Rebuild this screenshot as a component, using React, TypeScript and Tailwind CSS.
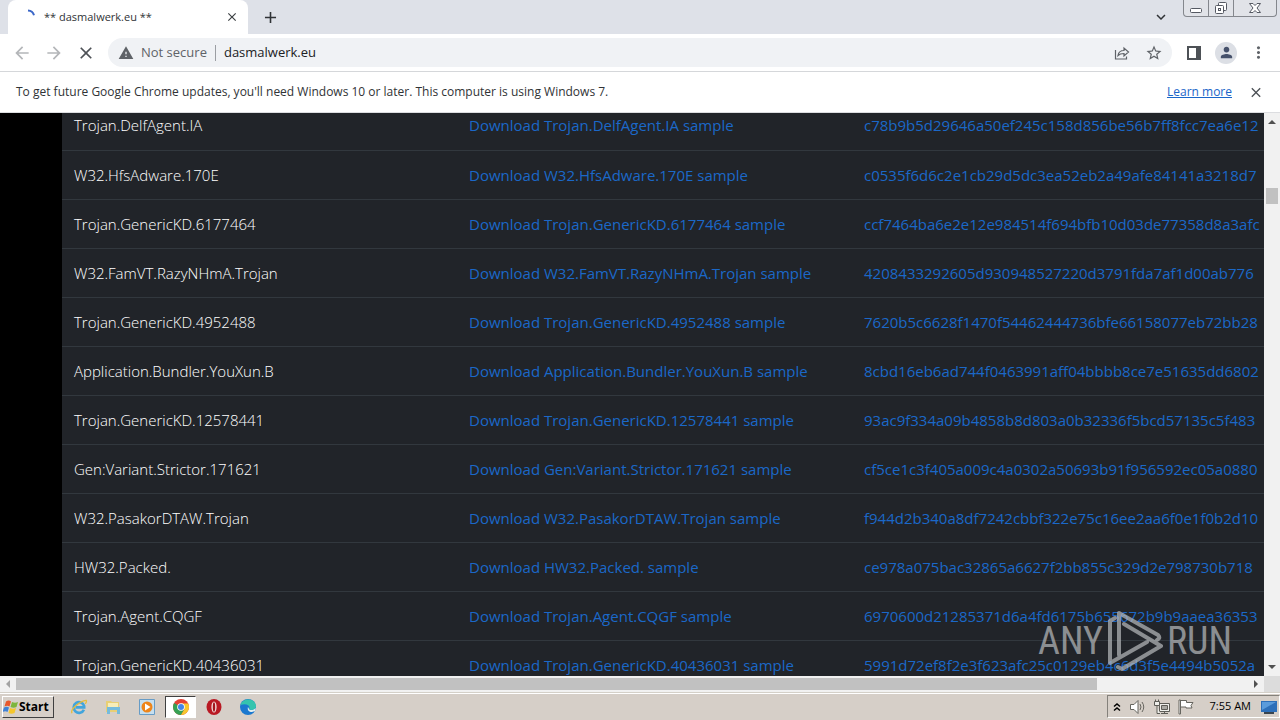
import type { ReactNode } from "react";
import { MdArrowBack, MdArrowForward, MdClose, MdWarning, MdStarBorder, MdPerson, MdMoreVert, MdAdd, MdExpandMore } from "react-icons/md";

type Sample = { name: string; hash: string };

const samples: Sample[] = [
  { name: "Trojan.DelfAgent.IA", hash: "c78b9b5d29646a50ef245c158d856be56b7ff8fcc7ea6e12" },
  { name: "W32.HfsAdware.170E", hash: "c0535f6d6c2e1cb29d5dc3ea52eb2a49afe84141a3218d7" },
  { name: "Trojan.GenericKD.6177464", hash: "ccf7464ba6e2e12e984514f694bfb10d03de77358d8a3afc" },
  { name: "W32.FamVT.RazyNHmA.Trojan", hash: "4208433292605d930948527220d3791fda7af1d00ab776" },
  { name: "Trojan.GenericKD.4952488", hash: "7620b5c6628f1470f54462444736bfe66158077eb72bb28" },
  { name: "Application.Bundler.YouXun.B", hash: "8cbd16eb6ad744f0463991aff04bbbb8ce7e51635dd6802" },
  { name: "Trojan.GenericKD.12578441", hash: "93ac9f334a09b4858b8d803a0b32336f5bcd57135c5f483" },
  { name: "Gen:Variant.Strictor.171621", hash: "cf5ce1c3f405a009c4a0302a50693b91f956592ec05a0880" },
  { name: "W32.PasakorDTAW.Trojan", hash: "f944d2b340a8df7242cbbf322e75c16ee2aa6f0e1f0b2d10" },
  { name: "HW32.Packed.", hash: "ce978a075bac32865a6627f2bb855c329d2e798730b718" },
  { name: "Trojan.Agent.CQGF", hash: "6970600d21285371d6a4fd6175b655672b9b9aaea36353" },
  { name: "Trojan.GenericKD.40436031", hash: "5991d72ef8f2e3f623afc25c0129eb4c6d3f5e4494b5052a" },
];

function IconButton({ label, className, children }: { label: string; className: string; children: ReactNode }) {
  return (
    <button type="button" aria-label={label} className={`flex shrink-0 items-center justify-center ${className}`}>
      {children}
    </button>
  );
}

function TabStrip() {
  return (
    <div className="flex h-[34px] shrink-0 items-start bg-[#dee1e8] pl-2">
      <div className="flex h-full w-60 items-center rounded-t-lg bg-white pr-2 pl-3">
        <svg viewBox="0 0 16 16" className="size-4 shrink-0" fill="none">
          <path d="M8 1.500a6.500 6.500 0 0 1 6 4.700" stroke="#3b67c8" strokeWidth="2" />
        </svg>
        <span className="ml-2 flex-1 text-[11px]">** dasmalwerk.eu **</span>
        <IconButton label="Close tab" className="size-4 text-[#3c4043]">
          <MdClose size={14} />
        </IconButton>
      </div>
      <IconButton label="New tab" className="ml-3 size-5 self-center text-[#303336]">
        <MdAdd size={19} />
      </IconButton>
      <div className="flex-1" />
      <IconButton label="Search tabs" className="mr-3 size-5 self-center text-[#303336]">
        <MdExpandMore size={18} />
      </IconButton>
      <div className="mr-[3px] flex h-[17px] w-[94px] divide-x divide-[#84878d] rounded-b-[4px] border border-t-0 border-[#84878d] bg-[#e1e3e8]">
        <IconButton label="Minimize" className="w-[25px]">
          <svg viewBox="0 0 14 14" className="size-3.5" fill="white" stroke="#555962">
            <rect x="1.500" y="7.500" width="11" height="4" rx="1" />
          </svg>
        </IconButton>
        <IconButton label="Restore" className="w-[25px]">
          <svg viewBox="0 0 14 14" className="size-3.5" fill="white" stroke="#555962">
            <rect x="4.500" y="1.500" width="8" height="8" rx="1" />
            <rect x="1.500" y="4.500" width="8" height="8" rx="1" />
            <rect x="4.500" y="7.500" width="2" height="2" />
          </svg>
        </IconButton>
        <IconButton label="Close" className="flex-1">
          <svg viewBox="0 0 14 14" className="size-3.5" fill="white" stroke="#555962">
            <path d="M1.500 2.500h3.500l2 2 2-2h3.500L9 7l3.500 4.500H9l-2-2-2 2H1.500L5 7z" />
          </svg>
        </IconButton>
      </div>
    </div>
  );
}

function Toolbar() {
  return (
    <div className="flex h-[38px] shrink-0 items-center border-b border-[#d5d7da] bg-white px-3 text-[#5f6368]">
      <IconButton label="Back" className="size-5 text-[#b4b6b9]">
        <MdArrowBack size={20} />
      </IconButton>
      <IconButton label="Forward" className="ml-3 size-5 text-[#b4b6b9]">
        <MdArrowForward size={20} />
      </IconButton>
      <IconButton label="Stop" className="ml-3 size-5 text-[#4d5156]">
        <MdClose size={20} />
      </IconButton>
      <div className="ml-3 flex h-[29px] flex-1 items-center rounded-full bg-[#f0f2f5] pl-2.5 text-[13px]">
        <button type="button" className="flex items-center gap-[7px] whitespace-nowrap">
          <MdWarning size={16} />
          Not secure
        </button>
        <span className="mx-2 h-4 w-px bg-[#9b9ea3]" />
        <input
          aria-label="Address"
          defaultValue="dasmalwerk.eu"
          className="min-w-0 flex-1 bg-transparent text-[#202124] outline-none"
        />
        <IconButton label="Share" className="size-5">
          <svg viewBox="0 0 16 16" className="size-4" fill="none" stroke="currentColor" strokeWidth="1.200">
            <path d="M1.500 5v9h11v-2.500M4 10.500C4.500 7 7 5.500 10 5.500V3l4.500 4-4.500 4V8.500c-2.500 0-4.500.4-6 2z" />
          </svg>
        </IconButton>
        <IconButton label="Bookmark" className="mr-2 ml-3 size-5">
          <MdStarBorder size={18} />
        </IconButton>
      </div>
      <IconButton label="Side panel" className="ml-3 size-5">
        <svg viewBox="0 0 14 14" className="size-3.5">
          <path d="M0 0h14v14H0zM2 2v10h7V2z" fill="#4d5156" fillRule="evenodd" />
        </svg>
      </IconButton>
      <IconButton label="Profile" className="mx-[11px] size-[22px] rounded-full bg-[#dcdfe5] text-[#46516b]">
        <MdPerson size={17} />
      </IconButton>
      <IconButton label="Menu" className="size-5">
        <MdMoreVert size={19} />
      </IconButton>
    </div>
  );
}

function UpdateNotice() {
  return (
    <div className="flex h-[41px] shrink-0 items-center border-b border-[#dcdde0] bg-white pr-4 pl-4 text-[12px]">
      <p className="flex-1 whitespace-pre">
        To get future Google Chrome updates, you'll need Windows 10 or later. This computer is using Windows 7.
      </p>
      <a href="#learn" className="text-[#1a66c9] underline">
        Learn more
      </a>
      <IconButton label="Dismiss" className="ml-4 size-4 text-[#4d5156]">
        <MdClose size={17} />
      </IconButton>
    </div>
  );
}

function SampleTable() {
  return (
    <table className="-mt-3 w-[1580px] table-fixed border-collapse bg-[#212429] text-left text-[15px] leading-6">
      <colgroup>
        <col className="w-[395px]" />
        <col className="w-[395px]" />
        <col />
      </colgroup>
      <tbody>
        {samples.map((s) => (
          <tr key={s.hash} className="h-[49px] border-b border-[#32383e]">
            <td className="px-3 font-light whitespace-nowrap text-white">{s.name}</td>
            <td className="px-3 whitespace-nowrap">
              <a href="#download" className="text-[#1b68c8]">
                Download {s.name} sample
              </a>
            </td>
            <td className="px-3 whitespace-nowrap">
              <a href="#hash" className="text-[#1b68c8]">
                {s.hash}
              </a>
            </td>
          </tr>
        ))}
      </tbody>
    </table>
  );
}

function Watermark() {
  return (
    <div className="pointer-events-none absolute right-8 bottom-1 flex items-center gap-1 text-[#b9bbbd] opacity-70">
      <span className="font-['Roboto_Condensed','Liberation_Sans_Narrow'] text-[38px] leading-none">ANY</span>
      <svg viewBox="0 0 56 62" className="h-[62px] w-14" fill="none" stroke="currentColor" strokeWidth="4" strokeLinecap="round" strokeLinejoin="round">
        <path d="M8 8 3 11v42l37-21M12 45V3l39 22q3 3-1 5M17 14l37 22-39 23-4-2" />
      </svg>
      <span className="font-['Roboto_Condensed','Liberation_Sans_Narrow'] text-[38px] leading-none">RUN</span>
    </div>
  );
}

function Arrow({ d, className }: { d: string; className: string }) {
  return (
    <svg viewBox="0 0 16 16" className={`size-4 ${className}`}>
      <path d={d} />
    </svg>
  );
}

function Viewport() {
  return (
    <div className="flex min-h-0 flex-1 flex-col">
      <div className="flex min-h-0 flex-1">
        <main className="relative min-w-0 flex-1 overflow-hidden bg-black pl-[62px]">
          <SampleTable />
          <Watermark />
        </main>
        <div className="flex w-4 shrink-0 flex-col items-center bg-[#f1f1f1]">
          <Arrow d="M4 11h8L8 7z" className="fill-[#505050]" />
          <div className="mt-[59px] h-4 w-3 bg-[#c1c1c1]" />
          <div className="flex-1" />
          <Arrow d="M4 5h8L8 9z" className="fill-[#505050]" />
        </div>
      </div>
      <div className="flex h-4 shrink-0 bg-[#f1f1f1]">
        <Arrow d="M10 4v8L6 8z" className="fill-[#a3a3a3]" />
        <div className="flex flex-1 items-center">
          <div className="mr-[151px] h-3 flex-1 bg-[#c1c1c1]" />
        </div>
        <Arrow d="M6 4v8l4-4z" className="fill-[#505050]" />
        <div className="w-4 bg-[#dcdcdc]" />
      </div>
    </div>
  );
}

function Taskbar() {
  return (
    <footer className="flex h-7 shrink-0 items-center border-t border-[#d4d0c8] bg-[#d6cfc8] text-black shadow-[inset_0_1px_0_#ffffff]">
      <button type="button" className="ml-0.5 flex h-[22px] w-[52px] items-center border border-t-white border-r-[#404040] border-b-[#404040] border-l-white text-[12px] font-bold">
        <svg viewBox="1 1 16 14" className="h-3.5 w-4 shrink-0">
          <path d="M4 2.500c2-1.500 4-1 5 0L7.500 7.500c-1.500-1-3-1-5 0z" fill="#e8582c" />
          <path d="M10 3c2 1 4 1 6 0l-1.500 5c-2 1-4 1-6 0z" fill="#7db63c" />
          <path d="M2 8.500c2-1 3.500-1 5 0L5.500 13c-1.500-1-3-1-5 0z" fill="#3f82d6" />
          <path d="M8 9c2 1 4 1 6 0l-1.500 5c-2 1-4 1-6 0z" fill="#f5c62c" />
        </svg>
        Start
      </button>
      <IconButton label="Internet Explorer" className="ml-[17px] size-4">
        <svg viewBox="0 0 18 18" className="size-4 overflow-visible" fill="none">
          <path d="M14.500 12a6 6 0 1 1 .3-4v1.500H5" stroke="#42a5dc" strokeWidth="3" />
          <path d="M1 16C-1 12 10 2 17 1.500c1 1 0 3-1 4" stroke="#e6bd3d" strokeWidth="1.500" />
        </svg>
      </IconButton>
      <IconButton label="Explorer" className="ml-[18px] size-4">
        <svg viewBox="0 0 16 16" className="size-4">
          <path d="M1 2h5l1 1h7v10H1z" fill="#e8cf75" />
          <path d="M3 4h10v4H3z" fill="#f7edb8" />
          <path d="M2 8h13v7h-3v-4H5v4H2z" fill="#75bbdc" />
        </svg>
      </IconButton>
      <IconButton label="Media Player" className="ml-[18px] size-4">
        <svg viewBox="0 0 16 16" className="size-4">
          <path d="M.5.5h15v15H.5z" fill="#c6dfef" stroke="#679cc6" />
          <circle cx="8" cy="8" r="5.500" fill="#ee8519" />
          <path d="M6 4.500v7L11.500 8z" fill="white" />
        </svg>
      </IconButton>
      <IconButton label="Chrome" className="ml-2.5 h-[22px] w-[31px] border border-t-[#404040] border-r-white border-b-white border-l-[#404040] bg-white">
        <svg viewBox="0 0 16 16" className="size-4">
          <circle cx="8" cy="8" r="8" fill="#e44134" />
          <path d="M8 8 1.100 4A8 8 0 0 0 8 16l3.500-6z" fill="#36a154" />
          <path d="M8 4.500h7.200A8 8 0 0 1 8 16l3.500-6z" fill="#f7c72e" />
          <circle cx="8" cy="8" r="3.800" fill="white" />
          <circle cx="8" cy="8" r="3" fill="#4285e8" />
        </svg>
      </IconButton>
      <IconButton label="Opera" className="ml-2.5 size-4">
        <svg viewBox="0 0 16 16" className="size-4">
          <ellipse cx="8" cy="8" rx="7.500" ry="8" fill="#b91923" />
          <ellipse cx="8" cy="8" rx="2.600" ry="5.500" fill="#f3dedd" />
          <ellipse cx="8" cy="8" rx="1.200" ry="4.800" fill="#a3151d" />
        </svg>
      </IconButton>
      <IconButton label="Edge" className="ml-[18px] size-4">
        <svg viewBox="0 0 16 16" className="size-4">
          <circle cx="8" cy="8" r="8" fill="#1b78cf" />
          <path d="M.5 6C2-1 15-2 16 7c0 4-5 5-7 3 2-3-2-6-8.500-4z" fill="#35c4ae" />
          <path d="M8 8c-1 3 1 5 4 5l3-1 1-3c-2 2-6 3-7 1z" fill="#e4eff0" />
        </svg>
      </IconButton>
      <div className="flex-1" />
      <div className="flex h-[23px] items-center border border-t-[#84817b] border-r-white border-b-white border-l-[#84817b] pr-0.5 pl-1">
        <IconButton label="Show hidden icons" className="size-2.5">
          <svg viewBox="0 0 10 10" className="size-2.5" fill="none" stroke="black" strokeWidth="1.500">
            <path d="M2 4.500 5 2l3 2.500M2 8.500 5 6l3 2.500" />
          </svg>
        </IconButton>
        <IconButton label="Volume" className="ml-2 size-4">
          <svg viewBox="0 0 16 16" className="size-4" fill="white" stroke="#66655f">
            <path d="M.5 5.500H4L8 1.500v13l-4-4H.5z" />
            <path d="M10 5q2 3 0 6M12 3q3.500 5 0 10" fill="none" />
          </svg>
        </IconButton>
        <IconButton label="Network" className="ml-2 size-4">
          <svg viewBox="0 0 16 16" className="size-4" fill="#eeeeea" stroke="#5d5c57">
            <path d="M5.500 4.500h10v8h-10zM7 14.500h7M10.500 12.500v2" />
            <path d="M7.500 6.500h6v4h-6z" fill="#aaa9a4" />
            <path d="M.5 2.500h5v4h-5zM1.500.5v2M4.500.5v2M3 6.500v8h3" />
          </svg>
        </IconButton>
        <IconButton label="Action Center" className="ml-2 size-4">
          <svg viewBox="0 0 16 16" className="size-4" fill="white" stroke="#66655f">
            <path d="M1 1h1.500v14H1zM2.500 1.500h6v2h6.500l-2 3 1 2.500H8v-1H2.500z" />
          </svg>
        </IconButton>
        <time className="ml-4 text-[11px] whitespace-nowrap">7:55 AM</time>
        <IconButton label="Show desktop" className="ml-2.5 size-4">
          <svg viewBox="0 0 16 16" className="size-4">
            <path d="M0 2h16v11H0z" fill="#2d6fb9" />
            <path d="M1 3h14L1 11z" fill="#5a9bdb" />
            <path d="M3 13h10v2H3z" fill="#39444f" />
          </svg>
        </IconButton>
      </div>
    </footer>
  );
}

export default function App() {
  return (
    <div className="flex h-screen flex-col overflow-hidden bg-white font-['Open_Sans','Noto_Sans',sans-serif] text-[#303336]">
      <TabStrip />
      <Toolbar />
      <UpdateNotice />
      <Viewport />
      <Taskbar />
    </div>
  );
}
